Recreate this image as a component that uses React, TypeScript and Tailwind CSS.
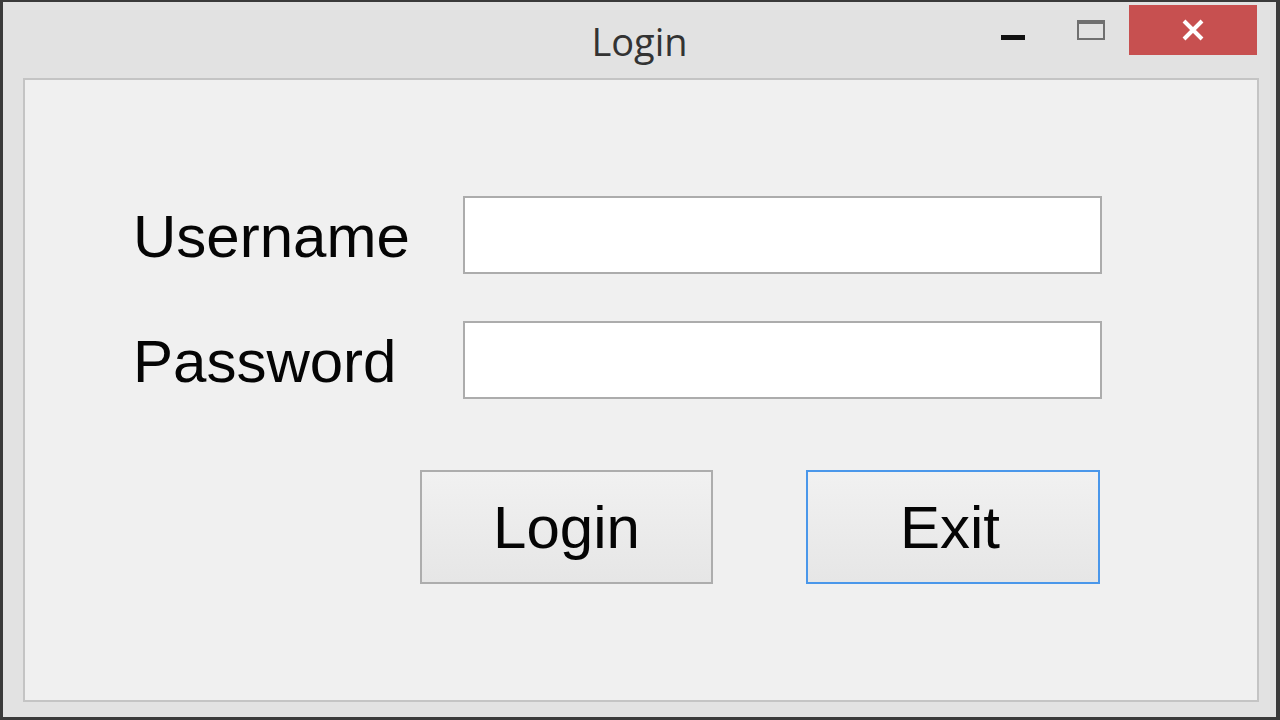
import React from "react";

export default function App() {
  return (
    <div className="w-[1280px] h-[720px] bg-[#e2e2e2] border-l-[3px] border-t-[2px] border-r-[4px] border-b-[3px] border-[#3a3a3a] flex flex-col overflow-hidden">
      {/* Title bar */}
      <div className="h-[76px] flex items-start relative shrink-0">
        <div className="absolute left-0 right-0 top-[20px] text-center text-[38px] leading-[38px] text-[#333333]" style={{ fontFamily: '"Open Sans", "Noto Sans", sans-serif' }}>
          Login
        </div>
        <div className="ml-auto flex items-start mr-[19px] mt-[3px] relative">
          <div className="w-[60px] h-[50px] flex items-center justify-center mr-[14px]">
            <div className="w-[24px] h-[5px] bg-[#111111] mt-[14px]" />
          </div>
          <div className="w-[60px] h-[50px] flex items-start justify-center mr-[12px]">
            <div className="w-[28px] h-[20px] border-[2px] border-t-[4px] border-[#707070] mt-[15px] ml-[8px]" />
          </div>
          <div className="w-[128px] h-[50px] bg-[#c75050] flex items-center justify-center">
            <svg width="24" height="22" viewBox="0 0 24 22">
              <path d="M3 2 L21 20 M21 2 L3 20" stroke="#ffffff" strokeWidth="4" strokeLinecap="butt" />
            </svg>
          </div>
        </div>
      </div>
      {/* Panel */}
      <div className="ml-[20px] mr-[17px] h-[624px] border-[2px] border-[#c4c4c4] bg-[#f0f0f0] flex flex-col pl-[108px] pt-[116px]" style={{ fontFamily: '"Liberation Sans", Arial, sans-serif' }}>
        <div className="flex items-center h-[78px]">
          <div className="w-[330px] text-[60px] leading-none text-[#050505] pt-[3px]">Username</div>
          <div className="w-[639px] h-[78px] bg-white border-[2px] border-[#acacac]" />
        </div>
        <div className="flex items-center h-[78px] mt-[47px]">
          <div className="w-[330px] text-[60px] leading-none text-[#050505] pt-[3px]">Password</div>
          <div className="w-[639px] h-[78px] bg-white border-[2px] border-[#acacac]" />
        </div>
        <div className="flex mt-[71px] pl-[287px]">
          <div className="w-[293px] h-[114px] border-[2px] border-[#adadad] bg-gradient-to-b from-[#f1f1f1] to-[#e6e6e6] flex items-center justify-center text-[60px] leading-none text-[#050505] pt-[2px]">
            Login
          </div>
          <div className="ml-[93px] w-[294px] h-[114px] border-[2px] border-[#4a97ea] bg-gradient-to-b from-[#f1f1f1] to-[#e6e6e6] flex items-center justify-center text-[60px] leading-none text-[#050505] pt-[2px] pr-[6px]">
            Exit
          </div>
        </div>
      </div>
    </div>
  );
}
